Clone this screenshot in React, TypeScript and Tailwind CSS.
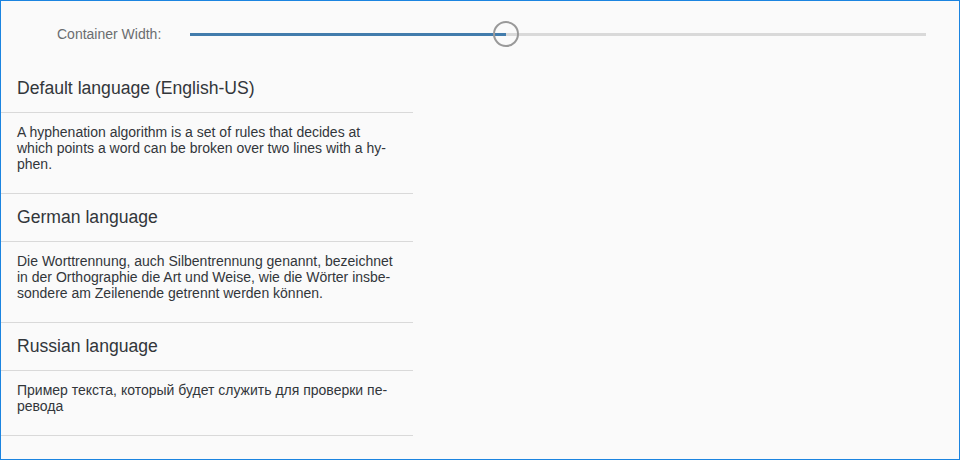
import React, { useState } from 'react';

const sections = [
  {
    lang: 'en',
    title: 'Default language (English-US)',
    text: 'A hyphenation algorithm is a set of rules that decides at which points a word can be broken over two lines with a hy\u00ADphen.',
  },
  {
    lang: 'de',
    title: 'German language',
    text: 'Die Worttrennung, auch Silbentrennung genannt, bezeichnet in der Orthographie die Art und Weise, wie die Wörter insbe\u00ADsondere am Zeilenende getrennt werden können.',
  },
  {
    lang: 'ru',
    title: 'Russian language',
    text: 'Пример текста, который будет служить для проверки пе\u00ADревода',
  },
];

const App: React.FC = () => {
  const [value] = useState(43);

  return (
    <div
      className="w-[960px] h-[460px] border border-[#1b84e0] bg-[#fafafa] overflow-hidden text-[#32363a]"
      style={{ fontFamily: '"Liberation Sans", Arial, sans-serif' }}
    >
      {/* Slider row */}
      <div className="h-[64px] flex items-center pl-[56px] pr-[33px] pt-[2px]">
        <span className="text-[14px] text-[#6a6d70] w-[133px] shrink-0">Container Width:</span>
        <div className="relative flex-1 h-[3px] bg-[#d9d9d9]">
          <div className="absolute left-0 top-0 h-full bg-[#427cac]" style={{ width: `${value}%` }} />
          <div
            className="absolute top-1/2 w-[26px] h-[26px] -translate-x-1/2 -translate-y-1/2 rounded-full border-2 border-[#999999]"
            style={{ left: `${value}%` }}
          />
        </div>
      </div>

      {/* Language panels */}
      <div className="w-[412px]">
        {sections.map((s) => (
          <div key={s.lang} lang={s.lang}>
            <div className="h-[48px] px-4 flex items-center border-b border-[#d9d9d9]">
              <h2 className="text-[17.6px] text-[#32363a]">{s.title}</h2>
            </div>
            <div className="px-4 pt-[11px] pb-[21px] border-b border-[#d9d9d9]">
              <p className="text-[14px] leading-[16px] text-[#32363a]">{s.text}</p>
            </div>
          </div>
        ))}
      </div>
    </div>
  );
};

export default App;
